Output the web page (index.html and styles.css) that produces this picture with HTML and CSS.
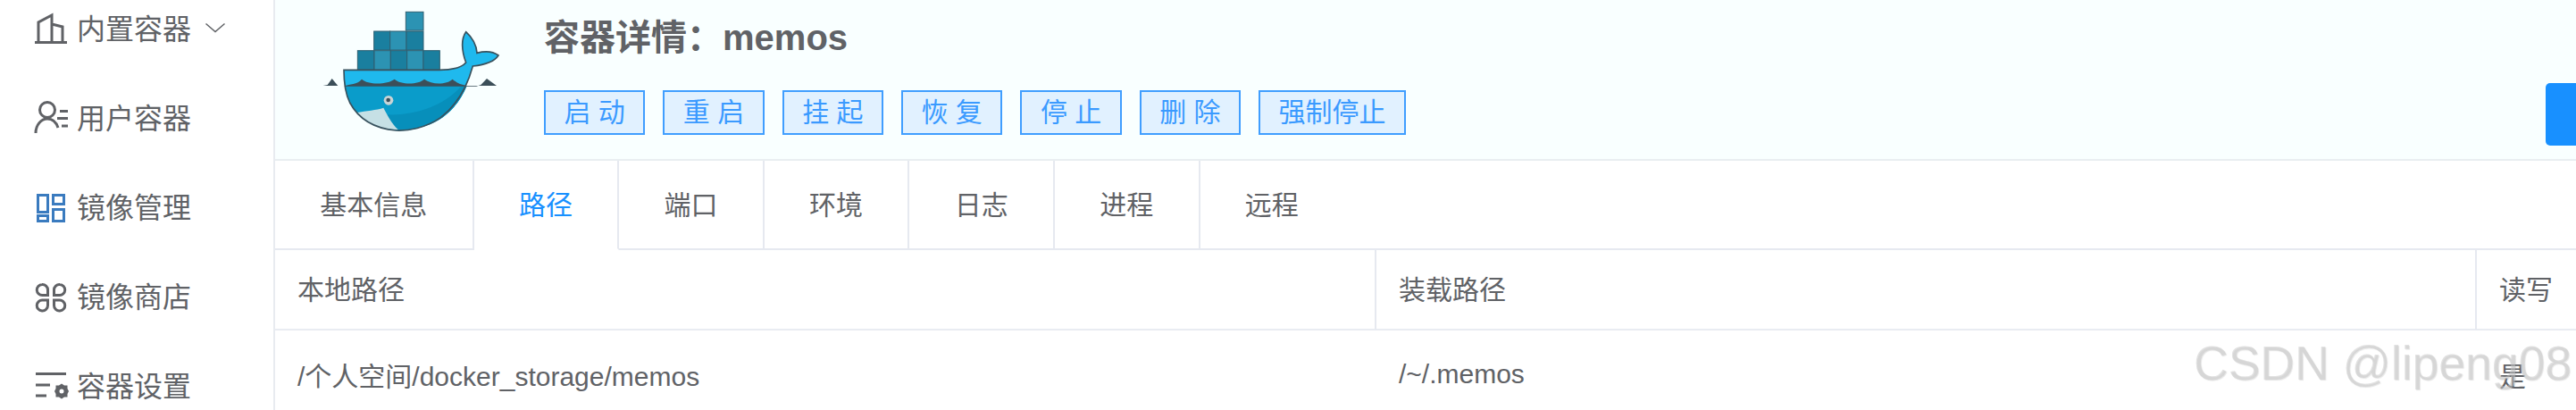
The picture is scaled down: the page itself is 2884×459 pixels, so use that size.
FILE: index.html
```html
<!DOCTYPE html>
<html lang="zh-CN">
<head>
<meta charset="utf-8">
<title>容器详情</title>
<link rel="stylesheet" href="styles.css">
</head>
<body>
<div class="app">
  <nav class="sidebar">
    <div class="menu-item">
      <svg class="icon" viewBox="0 0 40 40"><path class="ln" d="M2 34.500H38M6 34V12L21 4V34M21 14L33 17V34"/></svg>
      <span>内置容器</span>
      <svg class="chevron" viewBox="0 0 24 12"><path d="M1.500 1.500L12 10.500L22.500 1.500"/></svg>
    </div>
    <div class="menu-item">
      <svg class="icon" viewBox="0 0 40 40"><circle class="ln" cx="16" cy="10" r="8.500"/><path class="ln" d="M3 36C3 27 9 20 16 20C22 20 26 24 28 30M30 11.500H39M27 19.500H39M32 28H39"/></svg>
      <span>用户容器</span>
    </div>
    <div class="menu-item active-ic">
      <svg class="icon" viewBox="0 0 40 40"><path class="ln grid" d="M5.500 5.500H16.500V24.500H5.500ZM22.500 5.500H34.500V15.500H22.500ZM5.500 28.500H16.500V34.500H5.500ZM22.500 21.500H34.500V34.500H22.500Z"/></svg>
      <span>镜像管理</span>
    </div>
    <div class="menu-item">
      <svg class="icon" viewBox="0 0 40 40"><path class="ln" d="M10 5.500A6 6 0 0 1 16.500 11.500V17.500H10.500A6 6 0 0 1 10 5.500ZM30 5.500A6 6 0 0 0 23.500 11.500V17.500H29.500A6 6 0 0 0 30 5.500ZM10 35A6 6 0 0 0 16.500 29V23H10.500A6 6 0 0 0 10 35ZM30 35A6 6 0 0 1 23.500 29V23H29.500A6 6 0 0 1 30 35Z"/></svg>
      <span>镜像商店</span>
    </div>
    <div class="menu-item">
      <svg class="icon" viewBox="0 0 40 40"><path class="ln" d="M3 5.500H37M3 18H19M3 30H15"/><path class="gear" fill-rule="evenodd" d="M32 16.500L35 18.500L38.500 18.500L38.500 22L40 25L38.500 28L38.500 31.500L35 31.500L32 33.500L29 31.500L25.500 31.500L25.500 28L24 25L25.500 22L25.500 18.500L29 18.500ZM32 22.500A2.500 2.500 0 1 0 32 27.500A2.500 2.500 0 1 0 32 22.500Z"/></svg>
      <span>容器设置</span>
    </div>
  </nav>
  <main class="main">
    <header class="header">
      <svg class="whale" viewBox="120 30 600 420">
        <g class="boxes">
          <rect class="b1" x="403" y="40" width="59" height="62"/>
          <rect class="b2" x="296" y="105" width="54" height="63"/>
          <rect class="b1" x="350" y="105" width="55" height="63"/>
          <rect class="b2" x="405" y="105" width="57" height="63"/>
          <rect class="b2" x="241" y="170" width="56" height="65"/>
          <rect class="b1" x="297" y="170" width="55" height="65"/>
          <rect class="b2" x="352" y="170" width="55" height="65"/>
          <rect class="b1" x="407" y="170" width="55" height="65"/>
          <rect class="b2" x="462" y="170" width="55" height="65"/>
        </g>
        <path class="body-top" d="M195 235H515C560 235 590 228 605 210C590 170 588 130 605 107C625 125 640 150 642 178C665 172 695 172 714 186C700 208 665 218 628 222C620 250 612 270 605 290H198C195 270 195 250 195 235Z"/>
        <path class="body-low" d="M198 288H608C585 345 540 400 470 422C430 436 400 440 370 438C300 432 245 400 215 345C205 325 200 305 198 288Z"/>
        <path class="body-dark" d="M608 288C585 345 540 400 470 422C430 436 400 440 375 436C360 420 345 395 340 385C440 390 540 350 590 288Z"/>
        <path class="belly" d="M238 378C270 372 305 370 328 362C340 385 355 415 377 435C320 436 272 415 238 378Z"/>
        <path class="outline" d="M195 235H515C560 235 590 228 605 210C590 170 588 130 605 107C625 125 640 150 642 178C665 172 695 172 714 186C700 208 665 218 628 222C615 270 585 345 520 395C470 430 410 440 370 438C300 432 245 400 215 345C200 315 195 270 195 235Z"/>
        <path class="water" d="M125 288H175L155 264L140 285ZM195 290C215 280 240 285 255 266C275 285 340 285 365 266C385 285 445 285 465 266C490 285 540 285 560 266C575 280 590 285 608 288H708L675 264L655 285L640 290H195Z"/>
        <circle class="eye" cx="345" cy="337" r="16"/>
        <circle class="pupil" cx="344" cy="336" r="7"/>
      </svg>
      <div class="info">
        <h1 class="title">容器详情：memos</h1>
        <div class="actions">
          <button class="btn">启 动</button>
          <button class="btn">重 启</button>
          <button class="btn">挂 起</button>
          <button class="btn">恢 复</button>
          <button class="btn">停 止</button>
          <button class="btn">删 除</button>
          <button class="btn">强制停止</button>
        </div>
      </div>
      <div class="primary"></div>
    </header>
    <div class="tabs">
      <div class="tab">基本信息</div>
      <div class="tab active">路径</div>
      <div class="tab">端口</div>
      <div class="tab">环境</div>
      <div class="tab">日志</div>
      <div class="tab">进程</div>
      <div class="tab last">远程</div>
    </div>
    <div class="table">
      <div class="cell head">本地路径</div>
      <div class="cell head">装载路径</div>
      <div class="cell head last">读写</div>
      <div class="cell">/个人空间/docker_storage/memos</div>
      <div class="cell">/~/.memos</div>
      <div class="cell last">是</div>
    </div>
  </main>
</div>
<div class="watermark">CSDN @lipeng08</div>
</body>
</html>
```
FILE: styles.css
```css
* { box-sizing: border-box; }
html, body { margin: 0; padding: 0; height: 459px; overflow: hidden; background: #fff; }
body {
  position: relative;
  font-family: "Liberation Sans", "Noto Sans CJK SC", sans-serif;
  color: #606266;
}
.app { display: flex; width: 2884px; height: 459px; overflow: hidden; }

.sidebar {
  flex: 0 0 308px;
  border-right: 2px solid #e8ebf0;
  margin-top: -17px;
  height: 520px;
}
.menu-item {
  display: flex;
  align-items: center;
  height: 100px;
  padding-left: 37px;
  font-size: 32px;
  line-height: 1;
}
.icon { width: 40px; height: 40px; margin-right: 9px; flex: none; }
.ln { fill: none; stroke: #606266; stroke-width: 3; }
.grid { stroke: #3a7bbf; }
.gear { fill: #606266; }
.chevron { width: 24px; height: 12px; margin-left: 15px; margin-top: -4px; }
.chevron path { fill: none; stroke: #606266; stroke-width: 1.500; }

.main { flex: 1; min-width: 0; }
.header {
  display: flex;
  height: 180px;
  padding-left: 52px;
  background: #f9ffff;
  border-bottom: 2px solid #e9eef1;
  position: relative;
}
.whale { width: 200px; height: 140px; margin-top: 10px; flex: none; }
.boxes rect { stroke: #2f5f70; stroke-width: 3; }
.b1 { fill: #2c93b3; }
.b2 { fill: #1a7f9f; }
.body-top { fill: #1fb9ee; }
.body-low { fill: #0a9cca; }
.body-dark { fill: #078fbb; }
.belly { fill: #c6e0e5; }
.outline { fill: none; stroke: #39525e; stroke-width: 5; }
.water { fill: #3c4f59; }
.eye { fill: #c9d4d6; }
.pupil { fill: #3c4f59; }

.info { margin-left: 49px; }
.title {
  margin: 19px 0 0;
  font-size: 40px;
  line-height: 46px;
  font-weight: 700;
  color: #606266;
}
.actions { display: flex; gap: 20px; margin-top: 36px; }
.btn {
  height: 50px;
  padding: 0 20.5px;
  border: 2px solid #409eff;
  background: #e1f1ff;
  color: #3a9aff;
  font: inherit;
  font-size: 30px;
  line-height: 1;
}
.primary {
  position: absolute;
  left: 2542px;
  top: 93px;
  width: 60px;
  height: 70px;
  background: #1890ff;
  border-radius: 5px 0 0 5px;
}

.tabs {
  display: flex;
  height: 100px;
  border-bottom: 2px solid #e6e9f0;
}
.tab {
  height: 100px;
  padding: 22px 50.3px 0;
  border-right: 2px solid #e6e9f0;
  font-size: 30px;
  line-height: 56px;
}
.tab.last { border-right: 0; height: 98px; }
.tab.active { color: #1890ff; background: #fff; border-bottom: 2px solid #fff; }

.table {
  display: grid;
  grid-template-columns: 1233px 1232px 1fr;
  grid-auto-rows: 90px;
  font-size: 30px;
}
.cell {
  display: flex;
  align-items: center;
  padding-left: 25px;
  border-right: 2px solid #e6e9f0;
  padding-bottom: 4px;
}
.cell.last { border-right: 0; }
.cell.head { border-bottom: 2px solid #e9ecf2; height: 90px; }
.cell:not(.head) { border-right-color: transparent; height: 98px; padding-bottom: 0; }

.watermark {
  position: absolute;
  left: 2456px;
  top: 377px;
  font-size: 53.500px;
  line-height: 60px;
  white-space: nowrap;
  color: rgba(200, 200, 200, 0.5);
  text-shadow: 1px 1px 1px rgba(120, 120, 120, 0.2);
}
```
